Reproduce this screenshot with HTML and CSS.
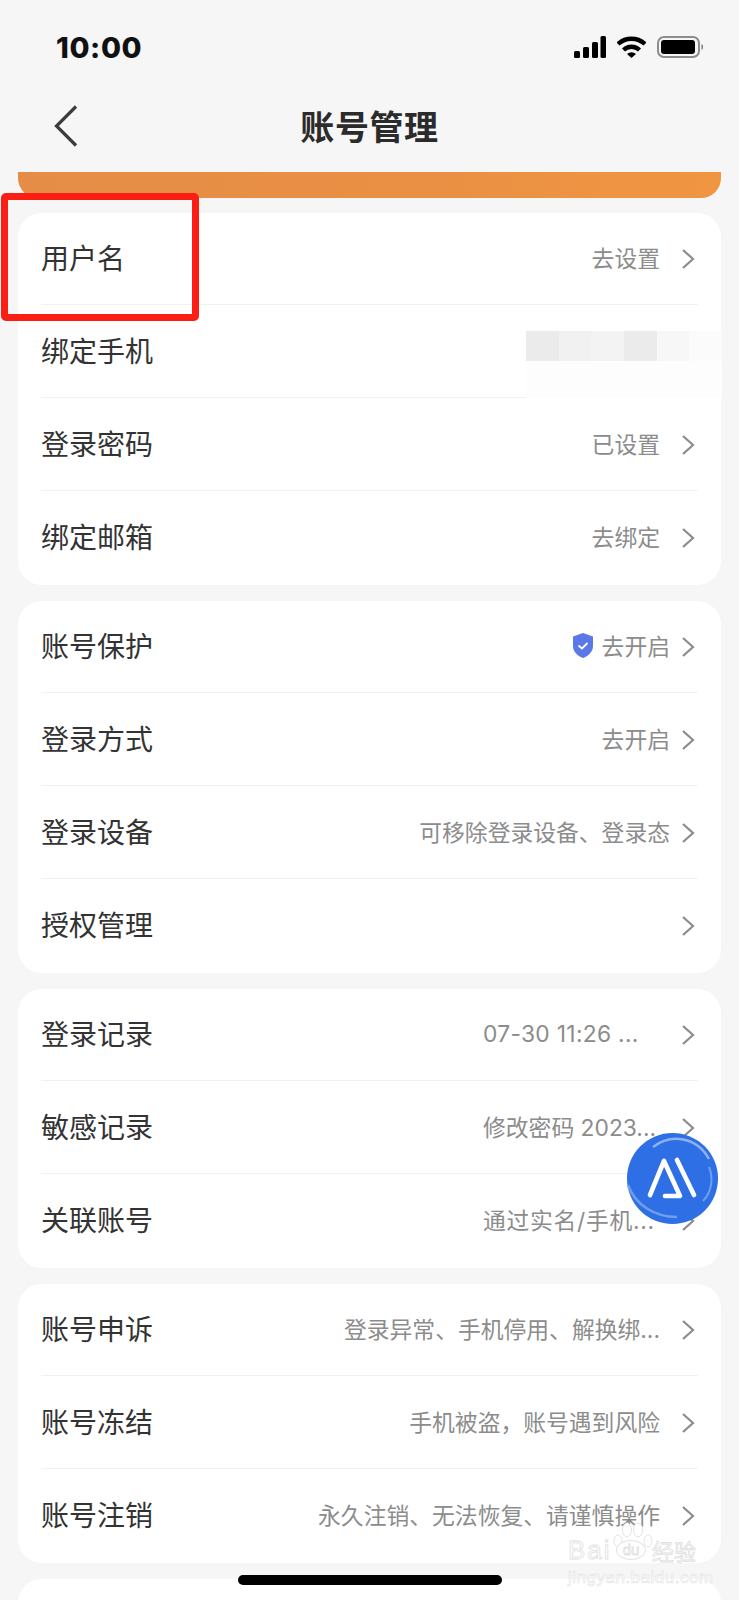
FILE: index.html
```html
<!DOCTYPE html>
<html lang="zh-CN">

<head>
  <meta charset="UTF-8">
  <meta name="viewport" content="width=device-width, initial-scale=1.0">
  <title>账号管理</title>
  <link rel="stylesheet" href="styles.css">
</head>

<body>
  <div class="app">
    <div class="status">
      <span class="time">10:00</span>
      <div class="status-icons">
        <svg class="icon-signal" viewBox="0 0 32 22" width="32" height="22">
          <rect x="0" y="15" width="6" height="7" rx="1.5"></rect>
          <rect x="9" y="11" width="6" height="11" rx="1.5"></rect>
          <rect x="18" y="6" width="6" height="16" rx="1.5"></rect>
          <rect x="26.5" y="0" width="5.5" height="22" rx="1.5"></rect>
        </svg>
        <svg class="icon-wifi" viewBox="0 0 29 22" width="29" height="22">
          <path d="M1 8 A20 20 0 0 1 28 8" fill="none" stroke="#000" stroke-width="4.4"></path>
          <path d="M6.5 14 A11.5 11.5 0 0 1 22.5 14" fill="none" stroke="#000" stroke-width="4.4"></path>
          <path d="M10 18 A6.5 6.5 0 0 1 19 18 L14.5 22 Z"></path>
        </svg>
        <svg class="icon-battery" viewBox="0 0 47 22" width="47" height="22">
          <rect x="1" y="1" width="41" height="20" rx="6" fill="none" stroke="#8c8c8c" stroke-width="2"></rect>
          <rect x="4" y="4" width="34" height="14" rx="3"></rect>
          <path d="M44.5 8 C46.5 8.5 46.5 13.5 44.5 14 Z" fill="#777"></path>
        </svg>
      </div>
    </div>

    <div class="nav">
      <svg class="back" viewBox="0 0 24 42" width="24" height="42">
        <path d="M22 1.5 L2.5 21 L22 40.5" fill="none" stroke="#3c3c3c" stroke-width="3.2"></path>
      </svg>
      <h1 class="title">账号管理</h1>
    </div>

    <div class="strip"></div>

    <div class="card">
      <div class="row"><span class="label">用户名</span><span class="value">去设置</span><svg class="arrow" viewBox="0 0 14 22"><path d="M2 2 L12 11 L2 20"></path></svg></div>
      <div class="row"><span class="label">绑定手机</span></div>
      <div class="row"><span class="label">登录密码</span><span class="value">已设置</span><svg class="arrow" viewBox="0 0 14 22"><path d="M2 2 L12 11 L2 20"></path></svg></div>
      <div class="row"><span class="label">绑定邮箱</span><span class="value">去绑定</span><svg class="arrow" viewBox="0 0 14 22"><path d="M2 2 L12 11 L2 20"></path></svg></div>
    </div>

    <div class="card">
      <div class="row near">
        <span class="label">账号保护</span>
        <svg class="shield" viewBox="0 0 20 25" width="20" height="25">
          <path d="M10 0 L20 3.5 V13 C20 19 15 23 10 25 C5 23 0 19 0 13 V3.5 Z" fill="#5b78e8"></path>
          <path d="M5.5 12.5 L9 15.5 L14.5 10" fill="none" stroke="#fff" stroke-width="1.8"></path>
        </svg>
        <span class="value">去开启</span><svg class="arrow" viewBox="0 0 14 22"><path d="M2 2 L12 11 L2 20"></path></svg>
      </div>
      <div class="row near"><span class="label">登录方式</span><span class="value">去开启</span><svg class="arrow" viewBox="0 0 14 22"><path d="M2 2 L12 11 L2 20"></path></svg></div>
      <div class="row near"><span class="label">登录设备</span><span class="value">可移除登录设备、登录态</span><svg class="arrow" viewBox="0 0 14 22"><path d="M2 2 L12 11 L2 20"></path></svg></div>
      <div class="row near"><span class="label">授权管理</span><svg class="arrow" viewBox="0 0 14 22"><path d="M2 2 L12 11 L2 20"></path></svg></div>
    </div>

    <div class="card">
      <div class="row"><span class="label">登录记录</span><span class="value short stamp">07-30 11:26 ...</span><svg class="arrow" viewBox="0 0 14 22"><path d="M2 2 L12 11 L2 20"></path></svg></div>
      <div class="row"><span class="label">敏感记录</span><span class="value short">修改密码 2023...</span><svg class="arrow" viewBox="0 0 14 22"><path d="M2 2 L12 11 L2 20"></path></svg></div>
      <div class="row"><span class="label">关联账号</span><span class="value short wide">通过实名/手机...</span><svg class="arrow" viewBox="0 0 14 22"><path d="M2 2 L12 11 L2 20"></path></svg></div>
    </div>

    <div class="card">
      <div class="row"><span class="label">账号申诉</span><span class="value">登录异常、手机停用、解换绑...</span><svg class="arrow" viewBox="0 0 14 22"><path d="M2 2 L12 11 L2 20"></path></svg></div>
      <div class="row"><span class="label">账号冻结</span><span class="value">手机被盗，账号遇到风险</span><svg class="arrow" viewBox="0 0 14 22"><path d="M2 2 L12 11 L2 20"></path></svg></div>
      <div class="row"><span class="label">账号注销</span><span class="value">永久注销、无法恢复、请谨慎操作</span><svg class="arrow" viewBox="0 0 14 22"><path d="M2 2 L12 11 L2 20"></path></svg></div>
    </div>

    <div class="card"></div>

    <!-- 红框标注 -->
    <div class="mark"></div>

    <!-- 手机号打码 -->
    <div class="mosaic">
      <i class="m1"></i><i class="m2"></i><i class="m3"></i><i class="m1"></i><i class="m4"></i><i class="m5"></i>
    </div>

    <div class="ai-btn">
      <svg viewBox="0 0 91 91" width="91" height="91">
        <path d="M26 14 C44 0 70 4 82 26" fill="none" stroke="#8db2f2" stroke-width="2.5"></path>
        <path d="M82 34 C87 46 84 60 76 68" fill="none" stroke="#6f9eee" stroke-width="2"></path>
        <path d="M1 52 C8 72 28 84 50 84" fill="none" stroke="#6f9eee" stroke-width="2.5"></path>
        <path d="M23 62 L37 28 L53 63 H38" fill="none" stroke="#fff" stroke-width="4.6" stroke-linejoin="round" stroke-linecap="round"></path>
        <path d="M50 27 L67 62" fill="none" stroke="#fff" stroke-width="4.6" stroke-linecap="round"></path>
      </svg>
    </div>

    <div class="watermark">
      <svg class="paw" viewBox="0 0 42 30" width="42" height="30">
        <ellipse cx="6" cy="19" rx="4" ry="6"></ellipse>
        <ellipse cx="15" cy="8" rx="4.5" ry="7"></ellipse>
        <ellipse cx="26" cy="8" rx="4.5" ry="7"></ellipse>
        <ellipse cx="36" cy="19" rx="4" ry="6"></ellipse>
      </svg>
      <div class="wm-main"><span class="wm-bai">Bai</span><span class="wm-du">du</span><span class="wm-cn">经验</span></div>
      <div class="wm-url">jingyan.baidu.com</div>
    </div>

    <div class="home-bar"></div>
  </div>
</body>

</html>
```

FILE: styles.css
```css
* {
  padding: 0;
  margin: 0;
  box-sizing: border-box;
}

html,
body {
  height: 1600px;
  overflow: hidden;
}

body {
  background-color: #f6f6f6;
  font-family: Inter, "Noto Sans CJK SC", sans-serif;
  color: #333;
}

.app {
  position: relative;
  width: 739px;
  height: 1600px;
  overflow: hidden;
  padding: 0 18px;
}

.status {
  display: flex;
  justify-content: space-between;
  align-items: center;
  height: 94px;
  padding: 0 17px 0 38px;
}

.time {
  font-size: 29px;
  font-weight: 800;
  letter-spacing: .6px;
  color: #111;
}

.status-icons {
  display: flex;
  align-items: center;
  gap: 11px;
}

.status-icons svg {
  display: block;
  fill: #000;
}

.nav {
  position: relative;
  display: flex;
  justify-content: center;
  align-items: center;
  height: 62px;
}

.back {
  position: absolute;
  left: 36px;
  top: 11px;
}

.title {
  font-size: 34px;
  font-weight: 700;
  letter-spacing: .6px;
  color: #2b2b2b;
}

.strip {
  height: 26px;
  margin: 16px 0 15px;
  border-radius: 0 0 20px 20px;
  background: linear-gradient(90deg, #e58d47, #ea9044 60%, #f09641);
}

.card {
  margin-bottom: 16px;
  padding: 0 23px;
  background-color: #fff;
  border-radius: 24px;
  min-height: 60px;
}

.row {
  display: flex;
  align-items: center;
  height: 92px;
  margin-bottom: 1px;
  padding: 0 3px 3px 0;
  border-bottom: 1px solid #f1f1f1;
}

.row:last-child {
  height: 93px;
  margin-bottom: 0;
  padding-bottom: 5px;
  border-bottom: none;
}

.label {
  flex: 1;
  font-size: 28px;
  color: #333;
}

.value {
  font-size: 22.8px;
  color: #8c8c8c;
  margin-right: 21px;
  white-space: nowrap;
}

.near .value {
  margin-right: 11px;
}

.short {
  width: 175px;
  margin-right: 23px;
}

.stamp {
  letter-spacing: .3px;
}

.wide {
  letter-spacing: .7px;
}

.arrow {
  width: 14px;
  height: 22px;
  margin-top: 4px;
  fill: none;
  stroke: #8c8c8c;
  stroke-width: 2.2;
}

.shield {
  margin-right: 9px;
}

.mark {
  position: absolute;
  left: 1px;
  top: 193px;
  width: 198px;
  height: 128px;
  border: 7px solid #fa1e14;
  border-radius: 5px;
}

.mosaic {
  position: absolute;
  left: 526px;
  top: 331px;
  width: 196px;
  height: 67px;
  display: grid;
  grid-template-columns: repeat(6, 1fr);
  grid-template-rows: 30px 37px;
  background: linear-gradient(#fff 30px, #fdfdfd 30px);
}

.m1 {
  background-color: #ebebeb;
}

.m2 {
  background-color: #f1f1f1;
}

.m3 {
  background-color: #f3f3f3;
}

.m4 {
  background-color: #f7f7f7;
}

.m5 {
  background-color: #fbfbfb;
}

.ai-btn {
  position: absolute;
  left: 627px;
  top: 1133px;
  width: 91px;
  height: 91px;
  border-radius: 50%;
  background-color: #2e6fe6;
}

.ai-btn svg {
  display: block;
}

.watermark {
  position: absolute;
  left: 568px;
  top: 1522px;
  width: 131px;
  color: #fff;
  font-family: "Liberation Sans", "Noto Sans CJK SC", sans-serif;
}

.paw {
  position: absolute;
  left: 44px;
  top: 0;
  fill: #fff;
  stroke: #e4e4e4;
}

.wm-main {
  position: relative;
  display: flex;
  align-items: center;
  height: 22px;
  margin-top: 17px;
  font-size: 26px;
  letter-spacing: 2px;
  -webkit-text-stroke: .8px #e0e0e0;
}

.wm-bai {
  width: 48px;
}

.wm-du {
  width: 30px;
  height: 20px;
  margin-right: 6px;
  border: 1px solid #e4e4e4;
  border-radius: 50%;
  background-color: #fff;
  font-size: 15px;
  line-height: 18px;
  letter-spacing: 0;
  text-align: center;
}

.wm-cn {
  font-size: 22px;
  letter-spacing: 0;
}

.wm-url {
  font-size: 17px;
  line-height: 18px;
  margin-top: 8px;
  letter-spacing: .5px;
  -webkit-text-stroke: .5px #e0e0e0;
  white-space: nowrap;
}

.home-bar {
  position: absolute;
  left: 238px;
  top: 1575px;
  width: 264px;
  height: 10px;
  border-radius: 5px;
  background-color: #000;
}
```
